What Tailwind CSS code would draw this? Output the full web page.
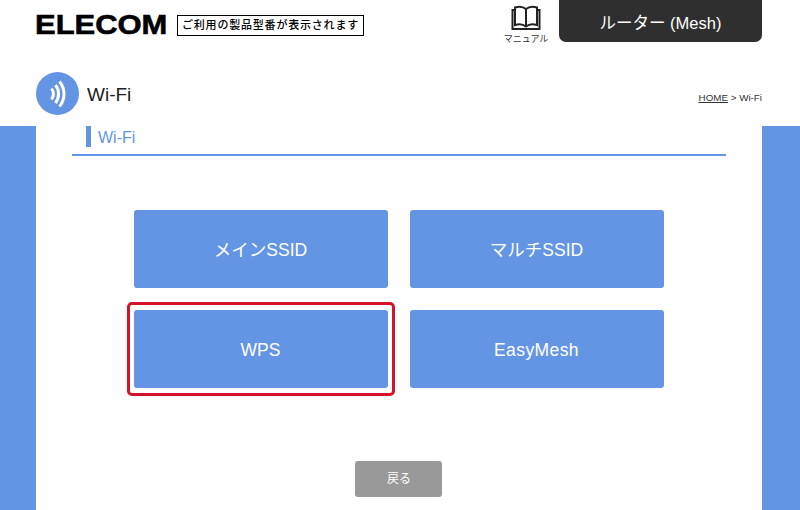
<!DOCTYPE html>
<html lang="ja">
<head>
<meta charset="utf-8">
<script src="https://cdn.jsdelivr.net/npm/@tailwindcss/browser@4"></script>
</head>
<body class="m-0 bg-white">
<div class="w-[800px] h-[510px] overflow-hidden flex flex-col bg-white font-['Liberation_Sans','Noto_Sans_CJK_JP',sans-serif]">
  <header class="h-[70px] shrink-0 flex items-start pl-[35px] pr-[38px]">
    <span class="mt-[9px] w-[132px] h-[32px] leading-[32px] text-[28px] font-bold text-black origin-left scale-x-[1.105] [-webkit-text-stroke:0.6px_black] whitespace-nowrap">ELECOM</span>
    <span class="ml-[10px] mt-[15px] w-[187px] h-[21px] border border-black flex items-center justify-center text-[11px] font-medium tracking-[0.8px] text-black whitespace-nowrap">ご利用の製品型番が表示されます</span>
    <div class="ml-auto mr-[11px] mt-[5px] w-[44px] flex flex-col items-center">
      <svg width="30" height="26" viewBox="0 0 30 26" fill="none" stroke="#222" stroke-width="2">
        <path d="M15 4C12 1.500 7 1.500 4 2.500V20C7 19 12 19 15 21.500C18 19 23 19 26 20V2.500C23 1.500 18 1.500 15 4Z"/>
        <path d="M15 4V21.500"/>
        <path d="M4 5H1.500V24H28.500V5H26"/>
      </svg>
      <span class="mt-[3px] text-[9px] leading-[11px] text-[#333] whitespace-nowrap">マニュアル</span>
    </div>
    <div class="w-[203px] h-[42px] pt-[4px] rounded-b-[7px] bg-[#2f2f2f] text-white text-[16.500px] flex items-center justify-center whitespace-nowrap">ルーター (Mesh)</div>
  </header>
  <div class="h-[56px] shrink-0 flex items-start pl-[36px] pr-[38px]">
    <div class="mt-[2px] w-[43px] h-[43px] rounded-full bg-[#6495e4] flex items-center justify-center">
      <svg width="24" height="30" viewBox="0 0 24 30" fill="none" stroke="#fff" stroke-width="3">
        <path d="M5.500 9.500C8 13 8 17 5.500 20.500"/>
        <path d="M9.500 6C13.500 11 13.500 19 9.500 24"/>
        <path d="M13.500 2.500C19.500 10 19.500 20 13.500 27.500"/>
      </svg>
    </div>
    <span class="ml-[8px] mt-[13px] text-[19px] leading-[24px] text-[#222]">Wi-Fi</span>
    <div class="ml-auto mt-[22px] text-[9.800px] leading-[12px] text-[#333]"><span class="underline">HOME</span> &gt; Wi-Fi</div>
  </div>
  <div class="flex-1 bg-[#6495e4] px-[36px] pr-[38px]">
    <main class="h-full bg-white flex flex-col items-center">
      <div class="self-start ml-[36px] w-[654px] h-[30px] border-b-2 border-[#6495e4] pl-[14px]">
        <div class="h-[21px] border-l-[5px] border-[#6495e4] pl-[7px] text-[16px] leading-[23px] text-[#6495e4]">Wi-Fi</div>
      </div>
      <div class="mt-[54px] ml-[-1px] grid grid-cols-[254px_254px] gap-[22px] text-white text-[17.500px]">
        <div class="h-[78px] pt-[2px] rounded-[3px] bg-[#6495e4] flex items-center justify-center">メインSSID</div>
        <div class="h-[78px] pt-[2px] rounded-[3px] bg-[#6495e4] flex items-center justify-center">マルチSSID</div>
        <div class="relative h-[78px] pt-[2px] rounded-[3px] bg-[#6495e4] flex items-center justify-center">WPS
          <span class="absolute -inset-x-[7px] -top-[8px] -bottom-[8px] border-[3px] border-[#d6122a] rounded-[5px]"></span>
        </div>
        <div class="h-[78px] pt-[2px] rounded-[3px] bg-[#6495e4] flex items-center justify-center tracking-[0.4px]">EasyMesh</div>
      </div>
      <div class="mt-[73px] ml-[-2px] w-[87px] h-[36px] pl-[2px] shrink-0 rounded-[3px] bg-[#999999] text-white text-[12px] flex items-center justify-center">戻る</div>
    </main>
  </div>
</div>
</body>
</html>
